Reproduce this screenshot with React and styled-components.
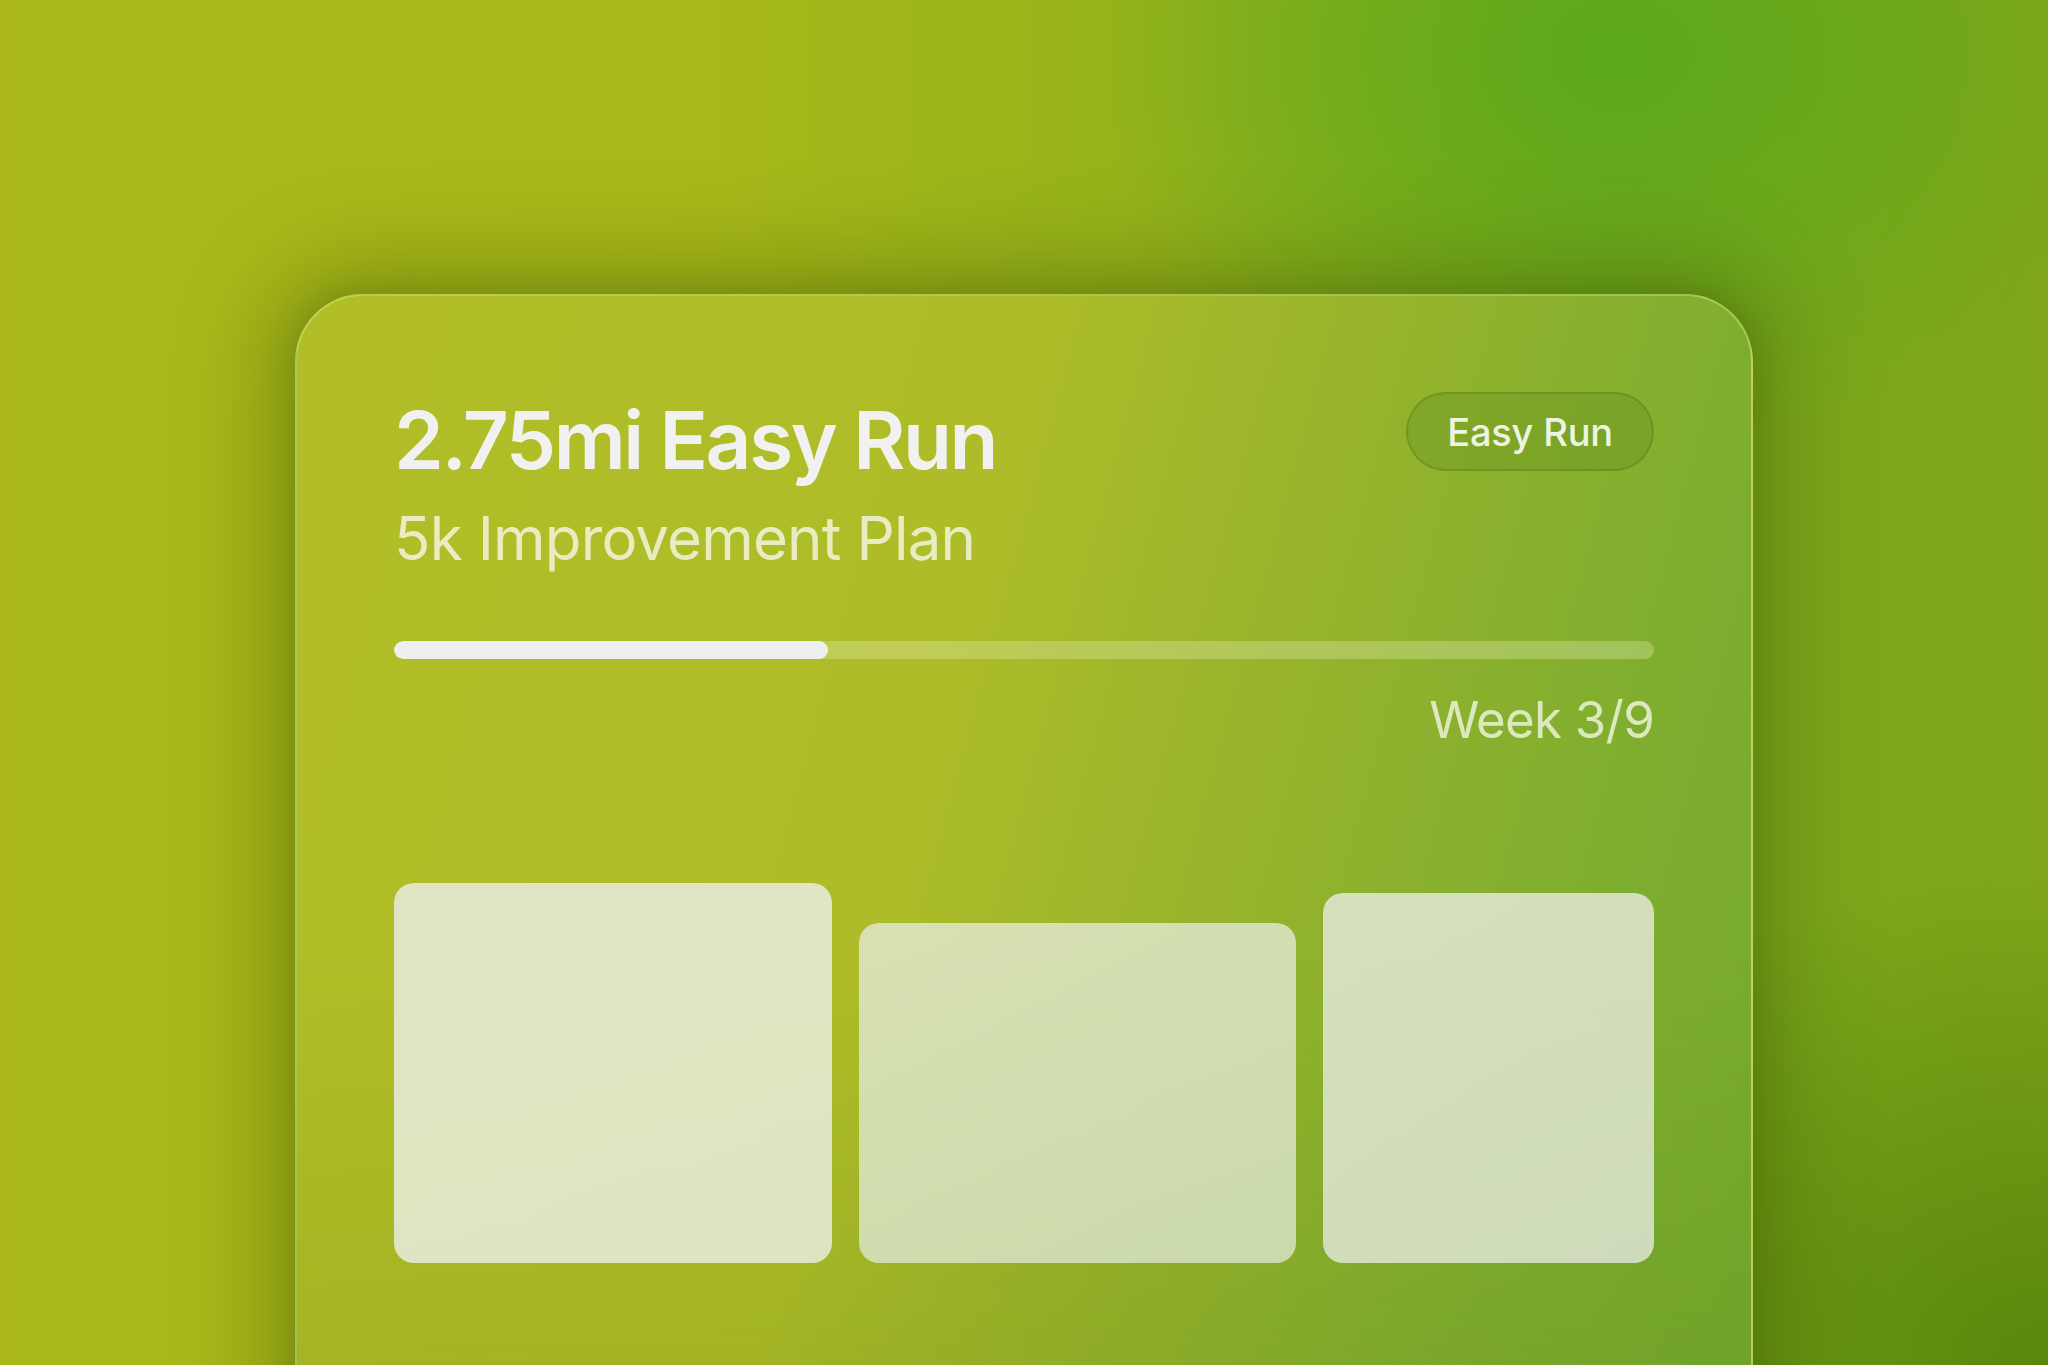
import React from "react";
import styled, { createGlobalStyle } from "styled-components";

const GlobalStyle = createGlobalStyle`
  html, body {
    margin: 0;
    padding: 0;
    width: 2048px;
    height: 1365px;
    overflow: hidden;
  }
  body {
    font-family: Inter, "Noto Sans", "Liberation Sans", sans-serif;
    -webkit-font-smoothing: antialiased;
  }
  * { box-sizing: border-box; }
`;

const Page = styled.div`
  width: 2048px;
  height: 1365px;
  overflow: hidden;
  padding: 294px 295px 0 295px;
  background:
    radial-gradient(ellipse 900px 700px at 100% 100%, rgba(84, 132, 10, 0.9) 0%, rgba(84, 132, 10, 0) 70%),
    radial-gradient(ellipse 700px 520px at 79% 4%, #5da91c 0%, rgba(93, 169, 28, 0) 75%),
    linear-gradient(90deg, #aab919 0%, #a7b819 35%, #93b21b 58%, #78a91c 78%, #80a51a 100%);
`;

const Card = styled.div`
  width: 1458px;
  min-height: 1200px;
  border-radius: 68px;
  border: 2px solid rgba(215, 235, 140, 0.45);
  padding: 96px 97px 200px 97px;
  background:
    linear-gradient(180deg, rgba(60, 90, 0, 0) 55%, rgba(60, 90, 0, 0.12) 100%),
    linear-gradient(105deg, #b1be27 0%, #adbc28 42%, #96b32c 62%, #7fae2f 82%, #74a92e 100%);
  box-shadow:
    0 0 90px 30px rgba(60, 80, 0, 0.35),
    0 0 30px 4px rgba(60, 80, 0, 0.2);
`;

const Header = styled.div`
  display: flex;
  justify-content: space-between;
  align-items: flex-start;
`;

const TitleBlock = styled.div`
  display: flex;
  flex-direction: column;
  gap: 14px;
`;

const Title = styled.h1`
  margin: 0;
  font-size: 80px;
  line-height: 96px;
  font-weight: 600;
  letter-spacing: -0.03em;
  color: #f1f2ef;
`;

const Subtitle = styled.div`
  font-size: 60px;
  line-height: 72px;
  font-weight: 400;
  letter-spacing: -0.014em;
  color: rgba(240, 244, 214, 0.88);
`;

const Badge = styled.div`
  height: 79px;
  padding: 0 39px;
  border-radius: 40px;
  display: flex;
  align-items: center;
  font-size: 38px;
  font-weight: 500;
  letter-spacing: -0.005em;
  color: #eef3e2;
  background: rgba(70, 120, 20, 0.2);
  border: 2px solid rgba(60, 110, 20, 0.28);
`;

const Track = styled.div`
  margin-top: 67px;
  height: 18px;
  border-radius: 9px;
  background: rgba(225, 235, 175, 0.35);
  overflow: hidden;
`;

const Fill = styled.div`
  height: 100%;
  border-radius: 9px;
  background: #eef0ef;
`;

const WeekLabel = styled.div`
  margin-top: 31px;
  text-align: right;
  font-size: 51px;
  line-height: 60px;
  font-weight: 400;
  letter-spacing: -0.015em;
  color: rgba(236, 242, 214, 0.85);
`;

const Tiles = styled.div`
  margin-top: 133px;
  display: grid;
  grid-template-columns: 438fr 437fr 331fr;
  gap: 27px;
  align-items: end;
`;

const Tile = styled.div`
  height: ${(p) => p.$h}px;
  border-radius: 20px;
  background: ${(p) => p.$bg};
`;

const tiles = [
  { h: 380, bg: "linear-gradient(160deg, rgba(230, 232, 208, 0.92) 0%, rgba(226, 232, 206, 0.92) 100%)" },
  { h: 340, bg: "linear-gradient(160deg, rgba(220, 228, 190, 0.92) 0%, rgba(208, 222, 182, 0.92) 100%)" },
  { h: 370, bg: "linear-gradient(160deg, rgba(220, 228, 200, 0.92) 0%, rgba(214, 224, 198, 0.92) 100%)" },
];

export default function App() {
  const progress = 434 / 1260;
  return (
    <>
      <GlobalStyle />
      <Page>
        <Card>
          <Header>
            <TitleBlock>
              <Title>2.75mi Easy Run</Title>
              <Subtitle>5k Improvement Plan</Subtitle>
            </TitleBlock>
            <Badge>Easy Run</Badge>
          </Header>
          <Track>
            <Fill style={{ width: `${progress * 100}%` }} />
          </Track>
          <WeekLabel>Week 3/9</WeekLabel>
          <Tiles>
            {tiles.map((t, i) => (
              <Tile key={i} $h={t.h} $bg={t.bg} />
            ))}
          </Tiles>
        </Card>
      </Page>
    </>
  );
}
